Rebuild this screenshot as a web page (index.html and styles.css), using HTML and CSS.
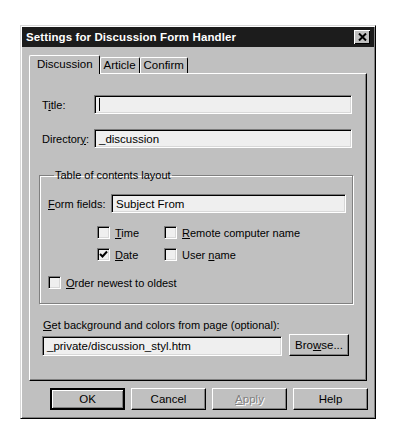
FILE: index.html
```html
<!DOCTYPE html>
<html lang="en">
  <head>
    <meta charset="UTF-8" />
    <meta name="viewport" content="width=device-width, initial-scale=1.0" />
    <title>Settings for Discussion Form Handler</title>
    <link rel="stylesheet" href="styles.css">
  </head>

  <body>
    <div class="dialog">
      <div class="titlebar">
        <span class="caption">Settings for Discussion Form Handler</span>
        <span class="close">
          <svg width="9" height="8" viewBox="0 0 9 8">
            <path d="M1 0.5 L8 7.5 M8 0.5 L1 7.5" stroke="#000" stroke-width="2" />
          </svg>
        </span>
      </div>

      <div class="content">
        <div class="tabs">
          <div class="tab active">Discussion</div>
          <div class="tab">Article</div>
          <div class="tab">Confirm</div>
        </div>

        <div class="panel">
          <div class="row first">
            <label class="label">T<u>i</u>tle:</label>
            <div class="field wide caret"></div>
          </div>
          <div class="row">
            <label class="label">Director<u>y</u>:</label>
            <div class="field wide">_discussion</div>
          </div>

          <fieldset class="group">
            <legend>Table of contents layout</legend>
            <div class="row">
              <label class="label short"><u>F</u>orm fields:</label>
              <div class="field mid">Subject From</div>
            </div>
            <div class="checks">
              <div class="col">
                <div class="check"><span class="box"></span><span><u>T</u>ime</span></div>
                <div class="check">
                  <span class="box">
                    <svg width="9" height="9" viewBox="0 0 9 9">
                      <path d="M1 4 L3.5 6.5 L8 1.5" fill="none" stroke="#000" stroke-width="2" />
                    </svg>
                  </span>
                  <span><u>D</u>ate</span>
                </div>
              </div>
              <div class="col">
                <div class="check"><span class="box"></span><span><u>R</u>emote computer name</span></div>
                <div class="check"><span class="box"></span><span>User <u>n</u>ame</span></div>
              </div>
            </div>
            <div class="check order"><span class="box"></span><span><u>O</u>rder newest to oldest</span></div>
          </fieldset>

          <div class="bg-label"><u>G</u>et background and colors from page (optional):</div>
          <div class="row bg-row">
            <div class="field path">_private/discussion_styl.htm</div>
            <div class="btn browse"><span>Bro<u>w</u>se...</span></div>
          </div>
        </div>

        <div class="buttons">
          <div class="btn default">OK</div>
          <div class="btn">Cancel</div>
          <div class="btn disabled"><span><u>A</u>pply</span></div>
          <div class="btn">Help</div>
        </div>
      </div>
    </div>
  </body>
</html>
```

FILE: styles.css
```css
body {
  margin: 0;
  background: #fff;
  font-family: "Liberation Sans", Arial, sans-serif;
  font-size: 11px;
  color: #000;
}
.dialog {
  box-sizing: border-box;
  width: 356px;
  height: 394px;
  margin: 25px 0 0 20px;
  background: #c0c0c0;
  border: 1px solid #000;
  border-top-color: #d8d8d8;
  border-left-color: #d8d8d8;
  box-shadow: inset 1px 1px 0 #fff, inset -1px -1px 0 #808080;
  padding: 1px;
}
.titlebar {
  height: 20px;
  background: #1c1c1c;
  color: #fff;
  display: flex;
  align-items: center;
  justify-content: space-between;
  padding: 0 4px 0 4px;
}
.caption {
  font-weight: bold;
  font-size: 11.5px;
  letter-spacing: 0.1px;
}
.close {
  box-sizing: border-box;
  width: 16px;
  height: 14px;
  background: #c0c0c0;
  display: flex;
  align-items: center;
  justify-content: center;
  box-shadow: inset 1px 1px 0 #fff, inset -1px -1px 0 #000;
}
.content {
  padding: 7px 0 0 7px;
}
.tabs {
  display: flex;
  align-items: flex-end;
  height: 19px;
  font-size: 11.5px;
}
.tab {
  height: 15px;
  padding: 0 3px;
  border: 1px solid #fff;
  border-bottom: none;
  border-right: 1px solid #000;
  border-radius: 2px 2px 0 0;
  line-height: 15px;
}
.tab.active {
  height: 18px;
  padding: 0 6px 0 7px;
  line-height: 16px;
  position: relative;
  top: 1px;
  background: #c0c0c0;
}
.panel {
  box-sizing: border-box;
  width: 338px;
  height: 308px;
  border: 1px solid #fff;
  border-right-color: #000;
  border-bottom-color: #000;
  box-shadow: inset -1px -1px 0 #808080;
  padding: 0 0 0 12px;
}
.row {
  display: flex;
  align-items: center;
  margin-top: 15px;
}
.row.first {
  margin-top: 21px;
}
.label {
  min-width: 52px;
}
.label.short {
  min-width: 63px;
}
.field {
  box-sizing: border-box;
  height: 19px;
  background: #efefef;
  border: 1px solid #7a7a7a;
  border-right-color: #fff;
  border-bottom-color: #fff;
  box-shadow: inset 1px 1px 0 #000, inset -1px -1px 0 #d8d8d8;
  padding: 2px 0 0 4px;
  line-height: 14px;
  font-size: 11.5px;
  white-space: nowrap;
}
.field.wide {
  width: 258px;
}
.field.mid {
  width: 235px;
}
.field.caret::before {
  content: "";
  display: inline-block;
  width: 1px;
  height: 13px;
  background: #000;
}
.group {
  box-sizing: border-box;
  width: 314px;
  height: 135px;
  margin: 21px 0 0 -3px;
  padding: 13px 0 0 8px;
  border: 1px solid #808080;
  box-shadow: 1px 1px 0 #fff, inset 1px 1px 0 #fff;
}
.group legend {
  padding: 0 1px;
  margin-left: 6px;
}
.group .row {
  margin-top: 0;
}
.checks {
  display: flex;
  margin: 13px 0 0 49px;
}
.col {
  display: flex;
  flex-direction: column;
  gap: 9px;
}
.col + .col {
  margin-left: 25px;
}
.check {
  display: flex;
  align-items: center;
  height: 13px;
}
.box {
  box-sizing: border-box;
  width: 13px;
  height: 13px;
  margin-right: 5px;
  background: #efefef;
  border: 1px solid #7a7a7a;
  border-right-color: #fff;
  border-bottom-color: #fff;
  box-shadow: inset 1px 1px 0 #000, inset -1px -1px 0 #d8d8d8;
  display: flex;
  align-items: center;
  justify-content: center;
}
.check.order {
  margin-top: 15px;
}
.bg-label {
  margin: 15px 0 0 1px;
}
.bg-row {
  margin-top: 3px;
}
.field.path {
  width: 240px;
  height: 20px;
  margin-top: 2px;
}
.btn {
  box-sizing: border-box;
  width: 75px;
  height: 22px;
  display: flex;
  align-items: center;
  justify-content: center;
  background: #c0c0c0;
  border: 1px solid #fff;
  border-right-color: #000;
  border-bottom-color: #000;
  box-shadow: inset -1px -1px 0 #808080;
  font-size: 11.5px;
}
.btn.browse {
  width: 60px;
  margin-left: 7px;
}
.btn.default {
  border: 2px solid #000;
  box-shadow: inset 1px 1px 0 #fff, inset -1px -1px 0 #808080;
}
.btn.disabled {
  color: #808080;
  text-shadow: 1px 1px 0 #fff;
}
.buttons {
  display: flex;
  gap: 6px;
  margin: 7px 0 0 21px;
}
```
